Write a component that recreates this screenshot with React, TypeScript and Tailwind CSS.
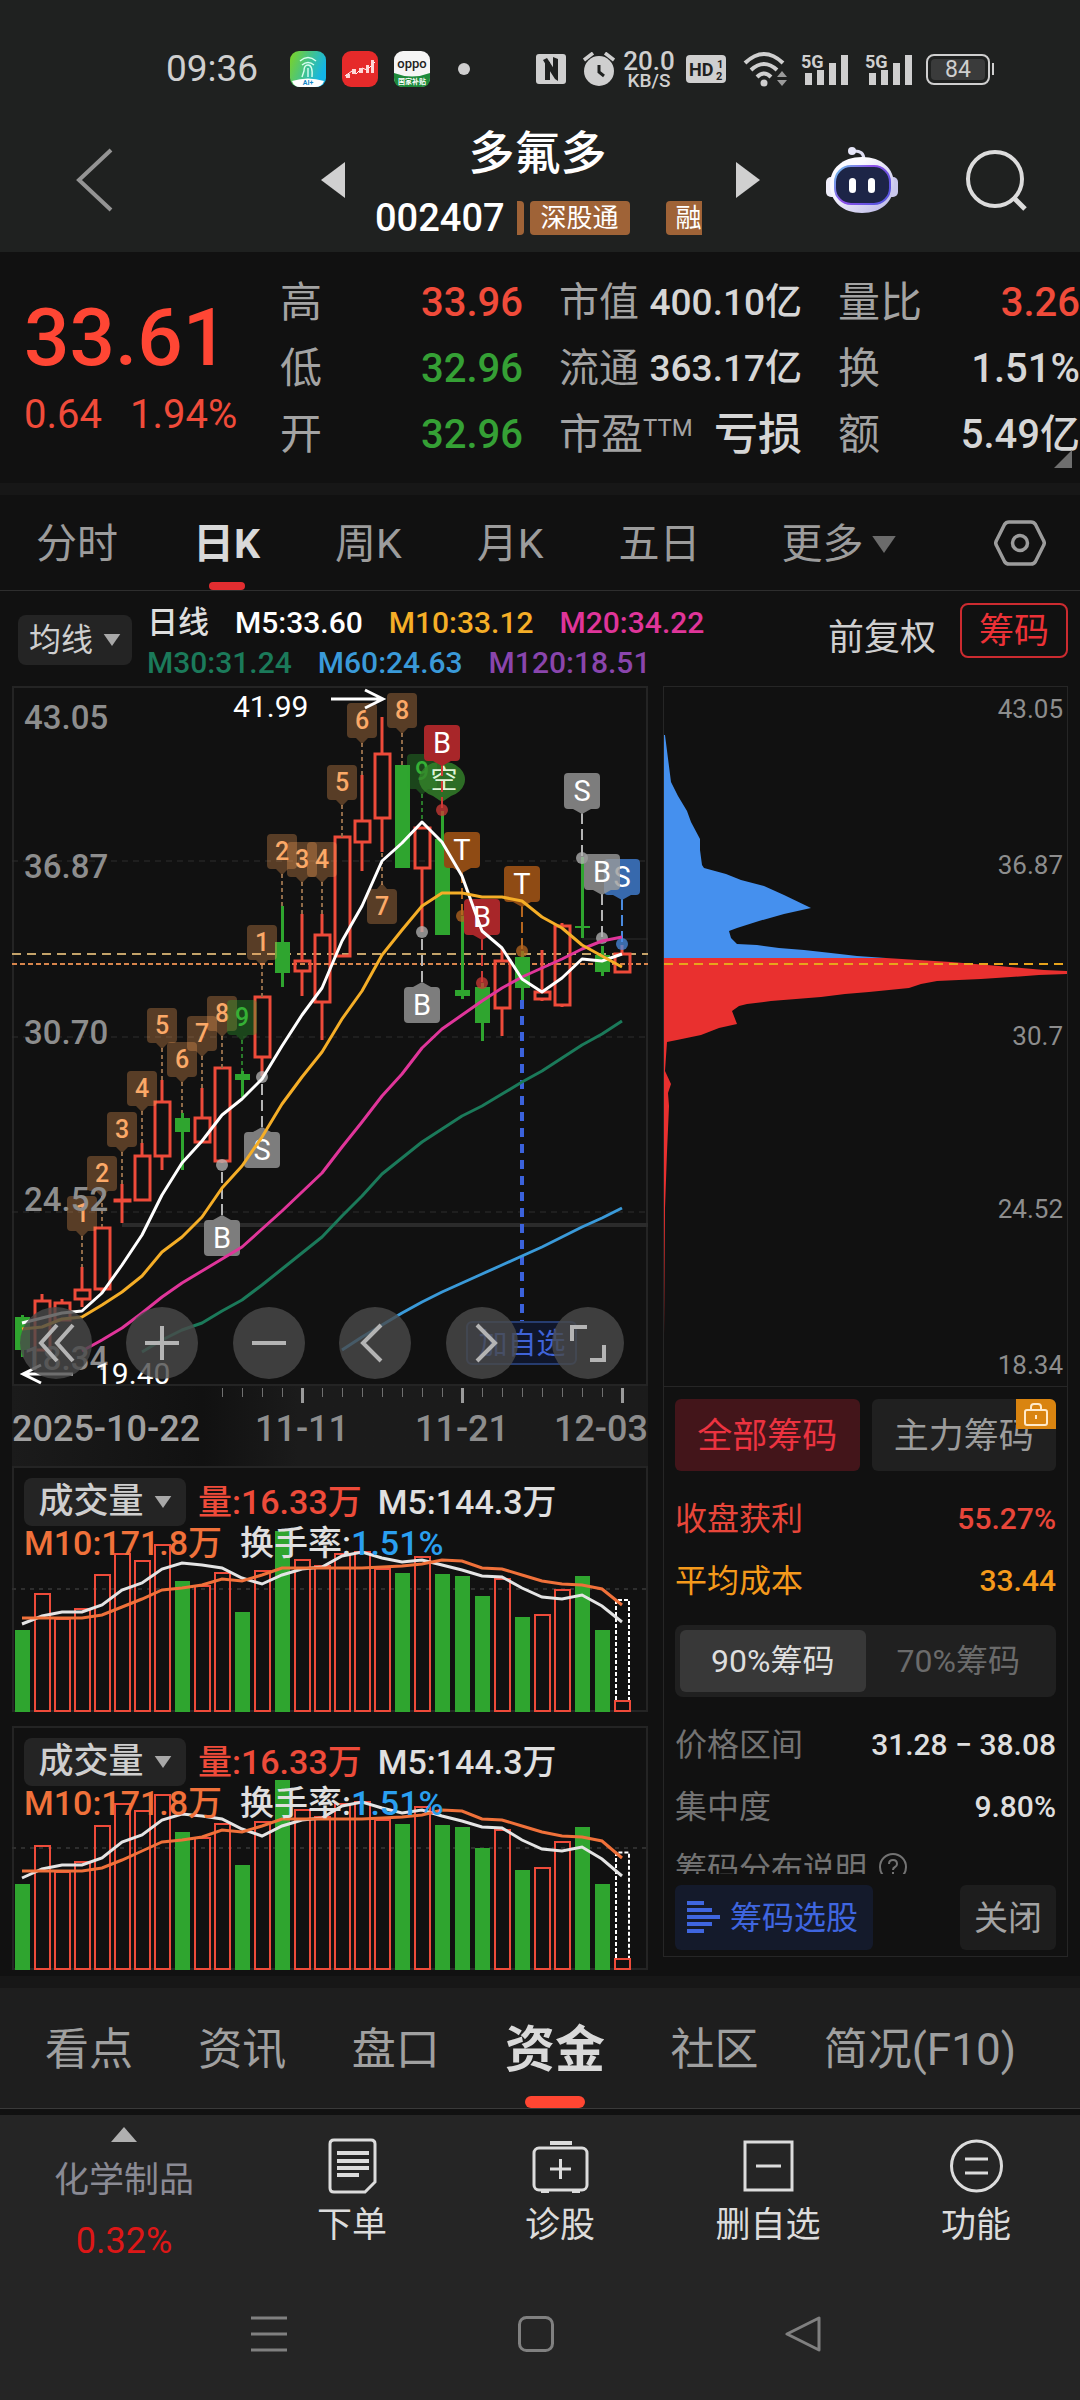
import React, { useState } from 'react'
import clsx from 'clsx'

const RED = '#ee4b3a'
const GREEN = '#2fa52f'

// x of the nth trading day inside the 636 wide charts
const dayX = (i: number) => 10 + i * 20

const toPoints = (values: number[], start = 0) =>
  values.map((y, i) => `${dayX(i + start)},${y}`).join(' ')

// [up, wick top, body top, body bottom, wick bottom]
type Candle = [boolean, number, number, number, number]

const candles: Candle[] = [
  [false, 629, 631, 664, 671],
  [true, 608, 615, 664, 664],
  [true, 613, 617, 634, 634],
  [true, 581, 604, 613, 621],
  [true, 541, 542, 603, 607],
  [true, 498, 514, 515, 537],
  [true, 457, 470, 514, 514],
  [true, 394, 416, 470, 484],
  [false, 427, 432, 446, 484],
  [true, 402, 432, 456, 456],
  [true, 382, 382, 475, 477],
  [false, 385, 388, 394, 411],
  [true, 311, 311, 371, 390],
  [false, 220, 256, 287, 301],
  [true, 228, 275, 285, 310],
  [true, 228, 249, 316, 354],
  [true, 151, 151, 270, 270],
  [true, 89, 135, 156, 185],
  [true, 31, 68, 132, 166],
  [false, 79, 79, 182, 182],
  [true, 141, 142, 182, 246],
  [false, 125, 153, 249, 249],
  [false, 230, 304, 310, 313],
  [false, 297, 301, 337, 355],
  [true, 262, 275, 322, 350],
  [false, 265, 271, 302, 314],
  [true, 264, 306, 313, 315],
  [true, 237, 240, 319, 321],
  [false, 171, 240, 241, 252],
  [false, 260, 269, 286, 290],
  [true, 259, 268, 286, 286]
]

const averages = [
  { color: '#e0359a', start: 3, values: [665, 654, 642, 627, 611, 597, 585, 573, 561, 543, 525, 506, 487, 461, 436, 410, 388, 362, 343, 329, 315, 302, 291, 282, 273, 263, 255, 251] },
  { color: '#1b7a5a', start: 6, values: [666, 654, 644, 637, 625, 614, 599, 583, 567, 551, 530, 510, 488, 472, 456, 443, 430, 420, 408, 396, 385, 372, 359, 348, 335] },
  { color: '#3a9ad9', start: 16, values: [664, 651, 639, 627, 616, 606, 597, 588, 579, 570, 561, 551, 541, 532, 522] },
  { color: '#ffffff', start: 0, values: [637, 632, 627, 625, 607, 579, 549, 509, 477, 455, 429, 413, 393, 360, 329, 302, 255, 220, 175, 157, 136, 156, 190, 245, 262, 293, 306, 292, 273, 275, 268] },
  { color: '#f5ae27', start: 0, values: [643, 641, 633, 631, 619, 606, 590, 566, 551, 531, 502, 480, 451, 418, 391, 366, 333, 305, 269, 244, 220, 207, 207, 211, 211, 215, 231, 242, 259, 270, 281] }
]

// nine-turn counters: [day, top, label, end of the dotted line]
const counters: [number, number, string, number][] = [
  [3, 510, '1', 581],
  [4, 470, '2', 541],
  [5, 426, '3', 498],
  [6, 385, '4', 457],
  [7, 322, '5', 394],
  [8, 356, '6', 427],
  [9, 330, '7', 402],
  [10, 310, '8', 382],
  [11, 314, '9', 385],
  [12, 239, '1', 311],
  [13, 148, '2', 220],
  [14, 156, '3', 228],
  [15, 156, '4', 228],
  [16, 79, '5', 151],
  [17, 17, '6', 89],
  [19, 7, '8', 79],
  [20, 68, '9', 137]
]

type Signal = { day: number; top: number; label: string; dot: number; color: string; line?: string; below?: boolean; opacity?: number }

const signals: Signal[] = [
  { day: 10, top: 534, label: 'B', dot: 479, color: '#7d7d7d', line: '#b5b5b5', below: true },
  { day: 12, top: 446, label: 'S', dot: 391, color: '#7d7d7d', line: '#b5b5b5', below: true },
  { day: 20, top: 301, label: 'B', dot: 246, color: '#7d7d7d', line: '#b5b5b5', below: true },
  { day: 22, top: 146, label: 'T', dot: 230, color: '#8f4b14', line: '#b5661f' },
  { day: 23, top: 213, label: 'B', dot: 297, color: '#a82629', line: '#cf3a35' },
  { day: 25, top: 180, label: 'T', dot: 265, color: '#8f4b14', line: '#b5661f' },
  { day: 28, top: 87, label: 'S', dot: 172, color: '#7d7d7d', line: '#b5b5b5' },
  { day: 30, top: 173, label: 'S', dot: 258, color: '#3769ad', line: '#4a8be0' },
  { day: 29, top: 168, label: 'B', dot: 252, color: '#9a9a9a', line: '#b5b5b5', opacity: 0.8 }
]

const priceLabels = [
  { text: '43.05', y: 43 },
  { text: '36.87', y: 192 },
  { text: '30.70', y: 358 },
  { text: '24.52', y: 525 },
  { text: '18.34', y: 684 }
]

const chipLabels = [
  { text: '43.05', y: 31 },
  { text: '36.87', y: 187 },
  { text: '30.7', y: 358 },
  { text: '24.52', y: 531 },
  { text: '18.34', y: 687 }
]

// volume bar heights, measured from the base line
const volumes = [82, 119, 94, 104, 138, 159, 152, 168, 131, 127, 140, 100, 142, 181, 153, 147, 159, 161, 144, 139, 156, 138, 136, 116, 134, 95, 98, 123, 136, 82]
const volumeM5 = [88, 96, 100, 100, 107, 122, 129, 143, 149, 147, 144, 134, 128, 137, 143, 145, 156, 160, 154, 150, 152, 147, 142, 136, 135, 124, 115, 113, 117, 106, 90]
const volumeM10 = [94, 94, 94, 94, 97, 105, 113, 122, 124, 127, 133, 131, 137, 144, 144, 144, 144, 144, 145, 146, 148, 152, 151, 144, 143, 137, 131, 128, 127, 123, 107]

const Caret: React.FC<{ className?: string }> = ({ className }) => (
  <svg viewBox="0 0 18 13" className={clsx('shrink-0', className)}>
    <path d="M0 0h18L9 13z" fill="currentColor" />
  </svg>
)

const Signal5G: React.FC = () => (
  <svg viewBox="0 0 48 34" className="h-[34px] w-12 overflow-visible">
    <text x="0" y="16" fontSize="18" fontWeight="700" fill="#cfcfcf">5G</text>
    <path d="M4 21h7v12H4zM16 18h7v15h-7zM28 11h7v22h-7zM40 3h7v30h-7z" fill="#cfcfcf" />
  </svg>
)

const StatusBar: React.FC = () => (
  <div className="flex h-12 items-center pr-[86px] pl-[166px] text-[#cfcfcf]">
    <span className="w-[124px] text-[37px] leading-12">09:36</span>
    <div className="flex items-center gap-4">
      <svg viewBox="0 0 36 36" className="size-9">
        <defs>
          <linearGradient id="finger" x1="0" x2="1" y1="0" y2="0.4">
            <stop offset="0" stopColor="#7ed321" />
            <stop offset="1" stopColor="#12b5e8" />
          </linearGradient>
        </defs>
        <rect width="36" height="36" rx="9" fill="url(#finger)" />
        <path d="M2 30q16-5 32 0-2 6-9 6H10q-6 0-8-6z" fill="#fff" />
        <path d="M10 10q8-7 16 0M12 14q6-5 12 0M18 14q-4 0-4 6l-2 6M18 14q5 0 4 12M18 17v9" fill="none" stroke="#d8fff0" strokeWidth="1.4" />
        <text x="18" y="34" fontSize="7" fontWeight="700" textAnchor="middle" fill="#1388c8">AI+</text>
      </svg>
      <svg viewBox="0 0 36 36" className="size-9">
        <rect width="36" height="36" rx="9" fill="#e62a2a" />
        <path d="M3 25l7-5 4 3 6-6 5 2 8-8" fill="none" stroke="#fff" strokeWidth="1" />
        <path d="M4 23h4v4H4zM10 18h4v5h-4zM17 17h4v5h-4zM24 14h3v8h-3zM29 9h3v13h-3z" fill="#ffd7d7" />
      </svg>
      <svg viewBox="0 0 36 36" className="size-9">
        <rect width="36" height="36" rx="9" fill="#f5f5f5" />
        <path d="M0 22q18 7 36 0v5q0 9-9 9H9q-9 0-9-9z" fill="#1d8a3a" />
        <text x="18" y="17" fontSize="13" fontWeight="500" textAnchor="middle" fill="#222">oppo</text>
        <text x="18" y="33" fontSize="7" fontWeight="700" textAnchor="middle" fill="#fff">国家补贴</text>
      </svg>
    </div>
    <span className="ml-7 size-3 rounded-full bg-[#cfcfcf]" />
    <div className="ml-auto flex items-center">
      <svg viewBox="0 0 30 30" className="size-[30px]">
        <rect width="30" height="30" rx="3" fill="#cfcfcf" />
        <path d="M9 26V5l5 3v18zM7 6l4-2 11 17v6l-3-2-9-14zM17 3l5 2v20l-5-7z" fill="#1f2120" />
      </svg>
      <svg viewBox="0 0 32 34" className="ml-[17px] h-[34px] w-8">
        <circle cx="16" cy="19" r="15" fill="#cfcfcf" />
        <path d="M1 8l9-7M31 8l-9-7" stroke="#cfcfcf" strokeWidth="3.500" />
        <path d="M16 13v7l5 4" fill="none" stroke="#1f2120" strokeWidth="3" />
      </svg>
      <div className="ml-2 flex w-[52px] flex-col items-center font-medium">
        <span className="text-[26px] leading-6">20.0</span>
        <span className="text-[19px] leading-4">KB/S</span>
      </div>
      <svg viewBox="0 0 40 28" className="ml-[11px] h-7 w-10">
        <rect width="40" height="28" rx="4" fill="#cfcfcf" />
        <text x="3" y="21" fontSize="18" fontWeight="700" fill="#1f2120">HD</text>
        <text x="31" y="13" fontSize="11" fontWeight="700" fill="#1f2120">1</text>
        <text x="30" y="25" fontSize="11" fontWeight="700" fill="#1f2120">2</text>
      </svg>
      <svg viewBox="0 0 46 36" className="ml-[17px] h-9 w-[46px]">
        <path d="M2 12q19-18 38 0M8 19q13-12 26 0M14 26q7-7 14 0" fill="none" stroke="#cfcfcf" strokeWidth="4" />
        <circle cx="21" cy="32" r="3.500" fill="#cfcfcf" />
        <path d="M34 26l5-6 5 6zM34 29h10l-5 6z" fill="#9b9b9b" />
      </svg>
      <span className="ml-3"><Signal5G /></span>
      <span className="ml-4"><Signal5G /></span>
      <div className="ml-[13px] flex h-[31px] w-16 items-center rounded-lg border-2 border-[#cfcfcf] p-[3px]">
        <span className="h-full w-full rounded-sm bg-[#3a3b3b] text-center text-[23px] leading-[21px]">84</span>
      </div>
      <span className="ml-0.5 h-3 w-0.5 bg-[#cfcfcf]" />
    </div>
  </div>
)

const Robot: React.FC = () => (
  <svg viewBox="0 0 72 68" className="h-[68px] w-[72px]">
    <defs>
      <linearGradient id="shell" x1="0" x2="1" y1="0" y2="1">
        <stop offset="0.3" stopColor="#fbfaff" />
        <stop offset="1" stopColor="#b5b2e4" />
      </linearGradient>
      <linearGradient id="visor" x1="0" x2="1" y1="0" y2="0.6">
        <stop offset="0" stopColor="#6ac4e8" />
        <stop offset="0.5" stopColor="#8d4fe8" />
        <stop offset="1" stopColor="#5a55e0" />
      </linearGradient>
    </defs>
    <path d="M27 5q11-1 11 9" fill="none" stroke="#dcdcf0" strokeWidth="3" />
    <circle cx="26" cy="5" r="4" fill="#e6e6f8" />
    <rect y="31" width="12" height="20" rx="5" fill="#eeedf9" />
    <rect x="60" y="31" width="12" height="20" rx="5" fill="#c9c7ec" />
    <path d="M36 11c20 0 32 12 32 27 0 18-13 29-32 29S4 56 4 38c0-15 12-27 32-27z" fill="url(#shell)" />
    <rect x="9" y="20" width="55" height="38" rx="16" fill="#1d2547" stroke="url(#visor)" strokeWidth="2" />
    <rect x="23" y="32" width="7" height="15" rx="3.500" fill="#fff" />
    <rect x="42" y="32" width="7" height="15" rx="3.500" fill="#fff" />
  </svg>
)

const Header: React.FC = () => (
  <header className="bg-[#1f2120] pt-[45px]">
    <StatusBar />
    <div className="flex h-[159px] items-center pt-[14px]">
      <button type="button" aria-label="返回" className="ml-[75px]">
        <svg viewBox="0 0 38 64" className="h-16 w-[38px]">
          <path d="M36 2L4 32l32 30" fill="none" stroke="#949494" strokeWidth="4" />
        </svg>
      </button>
      <button type="button" aria-label="上一只" className="ml-auto">
        <svg viewBox="0 0 24 36" className="h-9 w-6"><path d="M24 0v36L0 18z" fill="#d0d0d0" /></svg>
      </button>
      <div className="mx-[30px] w-[331px] pt-2">
        <h1 className="pr-1.5 text-center text-[46px] leading-[68px] font-medium text-white">多氟多</h1>
        <div className="flex items-center">
          <span className="text-[38px] leading-[62px] font-medium text-white">002407</span>
          <div className="ml-3 flex h-[34px] flex-1 overflow-hidden text-[26px] leading-[34px] whitespace-nowrap text-white">
            <span className="w-[7px] shrink-0 rounded-r-sm bg-[#9f6337]" />
            <span className="ml-[6px] shrink-0 rounded-sm bg-[#9f6337] px-[11px]">深股通</span>
            <span className="ml-9 shrink-0 rounded-l-sm bg-[#9f6337] pl-[10px]">融</span>
          </div>
        </div>
      </div>
      <button type="button" aria-label="下一只">
        <svg viewBox="0 0 24 36" className="h-9 w-6"><path d="M0 0v36l24-18z" fill="#d0d0d0" /></svg>
      </button>
      <button type="button" aria-label="智能助手" className="ml-[66px]"><Robot /></button>
      <button type="button" aria-label="搜索" className="mr-[53px] ml-[67px]">
        <svg viewBox="0 0 62 62" className="size-[62px]">
          <circle cx="30" cy="30" r="27" fill="none" stroke="#dcdcdc" strokeWidth="4" />
          <path d="M48 48l12 12" stroke="#dcdcdc" strokeWidth="5" />
        </svg>
      </button>
    </div>
  </header>
)

const Quote: React.FC = () => (
  <section className="grid grid-cols-[280fr_279fr_279fr_242fr] pt-[18px] pb-[15px] text-[40px] leading-[66px] font-medium">
    <div className="pl-6 text-[#ff4634]">
      <p className="pt-5 text-[80px] leading-[96px]">33.61</p>
      <p className="flex gap-7 text-[40px] leading-[58px] font-normal text-[#f04b3a]">
        <span>0.64</span>
        <span>1.94%</span>
      </p>
    </div>
    <dl className="pr-9">
      {[
        { label: '高', value: '33.96', up: true },
        { label: '低', value: '32.96', up: false },
        { label: '开', value: '32.96', up: false }
      ].map((row) => (
        <div key={row.label} className="flex justify-between">
          <dt className="text-[42px] font-normal text-[#a3a3a3]">{row.label}</dt>
          <dd className={row.up ? 'text-[#f04b3a]' : 'text-[#35a035]'}>{row.value}</dd>
        </div>
      ))}
    </dl>
    <dl className="pr-9 whitespace-nowrap">
      <div className="flex justify-between">
        <dt className="font-normal text-[#a3a3a3]">市值</dt>
        <dd className="text-[37px] text-[#d6d6d6]">400.10亿</dd>
      </div>
      <div className="flex justify-between">
        <dt className="font-normal text-[#a3a3a3]">流通</dt>
        <dd className="text-[37px] text-[#d6d6d6]">363.17亿</dd>
      </div>
      <div className="flex justify-between">
        <dt className="flex text-[42px] font-normal text-[#a3a3a3]">
          <span>市盈</span>
          <span className="text-2xl leading-[52px]">TTM</span>
        </dt>
        <dd className="text-[44px] text-[#d6d6d6]">亏损</dd>
      </div>
    </dl>
    <dl className="relative">
      {[
        { label: '量比', value: '3.26', up: true },
        { label: '换', value: '1.51%', up: false },
        { label: '额', value: '5.49亿', up: false }
      ].map((row) => (
        <div key={row.label} className="flex justify-between">
          <dt className="text-[42px] font-normal text-[#a3a3a3]">{row.label}</dt>
          <dd className={row.up ? 'text-[#f04b3a]' : 'text-[#d6d6d6]'}>{row.value}</dd>
        </div>
      ))}
      <svg viewBox="0 0 18 18" className="absolute right-2 bottom-0 size-[18px]">
        <path d="M18 0v18H0z" fill="#6f6f6f" />
      </svg>
    </dl>
  </section>
)

const periods = ['分时', '日K', '周K', '月K', '五日']

const PeriodTabs: React.FC = () => {
  const [period, setPeriod] = useState('日K')

  return (
    <nav className="flex h-24 items-center gap-[75px] border-b border-[#2e2e2e] pr-[34px] pl-9 text-[41px] leading-[95px] text-[#9c9c9c]">
      {periods.map((name) => (
        <button
          key={name}
          type="button"
          onClick={() => setPeriod(name)}
          className={clsx('relative pt-1', name === period && 'font-bold text-[#d9d9d9]')}
        >
          {name}
          {name === period && <span className="absolute bottom-0.5 left-1/2 h-2 w-9 -translate-x-1/2 rounded-sm bg-[#e32d30]" />}
        </button>
      ))}
      <button type="button" className="ml-1.5 flex items-center gap-2 pt-1">
        更多
        <Caret className="h-[17px] w-6 text-[#6b6b6b]" />
      </button>
      <button type="button" aria-label="设置" className="ml-auto">
        <svg viewBox="0 0 52 46" className="h-[46px] w-[52px]">
          <path d="M15 2h22q3 0 4.500 2.500l8 16q1.500 2.500 0 5l-8 16q-1.500 2.500-4.500 2.500H15q-3 0-4.500-2.500l-8-16q-1.500-2.500 0-5l8-16Q12 2 15 2z" fill="none" stroke="#9c9c9c" strokeWidth="3.500" />
          <circle cx="26" cy="23" r="7.500" fill="none" stroke="#9c9c9c" strokeWidth="3.500" />
        </svg>
      </button>
    </nav>
  )
}

const Legend: React.FC = () => (
  <div className="flex h-[95px] items-start px-3 pt-3 text-[30px] leading-10 font-medium whitespace-nowrap">
    <button type="button" className="mt-3 ml-1.5 flex h-[50px] w-[114px] items-center justify-center gap-2.5 rounded-lg bg-[#242424] text-[32px] font-normal text-[#cfcfcf]">
      均线
      <Caret className="h-3 w-[18px] text-[#a8a8a8]" />
    </button>
    <div className="ml-[15px]">
      <p className="flex gap-[26px]">
        <span className="text-[31px] text-[#dedede]">日线</span>
        <span className="text-white">M5:33.60</span>
        <span className="text-[#f5ae27]">M10:33.12</span>
        <span className="text-[#e0359a]">M20:34.22</span>
      </p>
      <p className="flex gap-[26px]">
        <span className="text-[#1b7a5a]">M30:31.24</span>
        <span className="text-[#3a9ad9]">M60:24.63</span>
        <span className="text-[#8a45ad]">M120:18.51</span>
      </p>
    </div>
    <button type="button" className="mt-[15px] ml-auto text-[36px] font-normal text-[#cfcfcf]">前复权</button>
    <button type="button" className="ml-6 h-[55px] w-[108px] rounded-lg border-2 border-[#cc2b30] pt-0.5 text-[35px] font-normal text-[#ec3137]">筹码</button>
  </div>
)

const Badge: React.FC<{ x: number; top: number; label: string; end: number; below?: boolean }> = ({ x, top, label, end, below }) => {
  const fill = label === '9' ? 'rgba(47,165,47,0.35)' : 'rgba(255,165,90,0.3)'
  const text = label === '9' ? '#35b035' : '#fba968'
  return (
    <g>
      <path d={`M${x} ${below ? top - 4 : top + 40}V${end}`} stroke={label === '9' ? '#2a7a2a' : '#8f6a48'} strokeWidth="2" strokeDasharray="4 3" />
      <path
        d={
          below
            ? `M${x - 11} ${top}h6l5-6 5 6h6a4 4 0 0 1 4 4v27a4 4 0 0 1-4 4h-22a4 4 0 0 1-4-4v-27a4 4 0 0 1 4-4z`
            : `M${x - 11} ${top}h22a4 4 0 0 1 4 4v27a4 4 0 0 1-4 4h-5l-6 6-6-6h-5a4 4 0 0 1-4-4v-27a4 4 0 0 1 4-4z`
        }
        fill={fill}
      />
      <text x={x} y={top + 26} fontSize="25" fontWeight="500" textAnchor="middle" fill={text}>{label}</text>
    </g>
  )
}

const SignalMark: React.FC<{ signal: Signal }> = ({ signal }) => {
  const { day, top, label, dot, color, line, below, opacity = 1 } = signal
  const x = dayX(day)
  return (
    <g>
      <circle cx={x} cy={dot} r="6" fill={line} opacity="0.75" />
      <path d={below ? `M${x} ${top - 5}V${dot + 5}` : `M${x} ${top + 40}V${dot}`} stroke={line} strokeWidth="2" strokeDasharray="11 5" />
      <g opacity={opacity}>
        <rect x={x - 18} y={top} width="36" height="36" rx="4" fill={color} />
        <path d={below ? `M${x - 9} ${top}l9-5 9 5z` : `M${x - 9} ${top + 36}l9 5 9-5z`} fill={color} />
      </g>
      <text x={x} y={top + 28} fontSize="29" textAnchor="middle" fill="#fff">{label}</text>
    </g>
  )
}

const CandleChart: React.FC = () => (
  <svg viewBox="0 0 636 700" className="block h-auto w-full">
    <path d="M0 1H636M0 699H636" stroke="#242424" strokeWidth="2" />
    <path d="M1 0V700M635 0V700" stroke="#242424" strokeWidth="2" />
    <path d="M0 175H636M0 351H636M0 526H636" stroke="#2e2e2e" strokeDasharray="6 5" />
    <path d="M570 253H636" stroke="#2e2e2e" />
    <path d="M110 539H636" stroke="#2b2b2b" strokeWidth="4" />
    <path d="M0 268H636" stroke="#c4a36a" strokeWidth="2" strokeDasharray="9 6" />
    <path d="M0 278H636" stroke="#d8854c" strokeWidth="2" strokeDasharray="5 3" />

    <path d={`M${dayX(25)} 314V636`} stroke="#3b62dc" strokeWidth="4" strokeDasharray="9 7" />
    <rect x="455" y="636" width="109" height="42" rx="5" fill="#10162a" stroke="#263c70" strokeWidth="2" />
    <text x="510" y="668" fontSize="29" textAnchor="middle" fill="#3f63d8">加自选</text>

    {candles.map(([up, high, top, bottom, low], i) => {
      const x = dayX(i)
      return up ? (
        <g key={i} stroke={RED} strokeWidth="3" fill="none">
          <path d={`M${x} ${high}V${top}M${x} ${bottom}V${low}`} />
          <rect x={x - 7} y={top} width="15" height={bottom - top} />
        </g>
      ) : (
        <g key={i} fill={GREEN}>
          <rect x={x - 1} y={high} width="3" height={low - high} />
          <rect x={x - 7} y={top} width="15" height={Math.max(bottom - top, 2)} />
        </g>
      )
    })}

    {counters.map(([day, top, label, end]) => (
      <Badge key={day} x={dayX(day)} top={top} label={label} end={end} />
    ))}
    <Badge x={dayX(18)} top={203} label="7" end={166} below />

    {/* short signal with the buy mark above it */}
    <path d="M430 116l-9-6a23 18 0 1 1 18 0z" fill="#35852a" opacity="0.8" />
    <text x="432" y="103" fontSize="27" textAnchor="middle" fill="#dff5d8">空</text>
    <SignalMark signal={{ day: 21, top: 39, label: 'B', dot: 124, color: '#a82629', line: '#cf3a35' }} />
    {signals.map((signal) => (
      <SignalMark key={signal.day} signal={signal} />
    ))}

    {averages.map(({ color, start, values }) => (
      <polyline key={color} points={toPoints(values, start)} fill="none" stroke={color} strokeWidth="3" strokeLinejoin="round" />
    ))}

    {priceLabels.map(({ text, y }) => (
      <text key={text} x="12" y={y} fontSize="33" fontWeight="500" fill="#8d8d8d">{text}</text>
    ))}

    <g stroke="#fff" strokeWidth="3" fill="none">
      <path d="M319 13H370M353 4l18 9-18 9" />
      <path d="M61 688H12M29 679l-18 9 18 9" />
    </g>
    <text x="221" y="31" fontSize="30" fill="#fff">41.99</text>
    <text x="83" y="698" fontSize="30" fill="#fff">19.40</text>
  </svg>
)

const tools = [
  { label: '最早', d: 'M37 18L21 36l16 18M53 18L37 36l16 18' },
  { label: '放大', d: 'M19 36h34M36 19v34' },
  { label: '缩小', d: 'M19 36h34' },
  { label: '左移', d: 'M42 18L24 36l18 18' },
  { label: '右移', d: 'M31 18l18 18-18 18' },
  { label: '全屏', d: 'M20 34V20h15M38 53h14V38' }
]

const ChartTools: React.FC = () => (
  <div className="absolute inset-x-0 bottom-[7px] flex justify-between pr-6 pl-2">
    {tools.map((tool) => (
      <button key={tool.label} type="button" aria-label={tool.label} className="size-[72px] rounded-full bg-[#4a4a4a]/80">
        <svg viewBox="0 0 72 72" className="size-full">
          <path d={tool.d} fill="none" stroke="#b4b4b4" strokeWidth="4" />
        </svg>
      </button>
    ))}
  </div>
)

const DateAxis: React.FC = () => (
  <div className="bg-linear-to-r from-[#1b1b1b] via-[#111111] via-30% to-[#1b1b1b] to-45%">
    <svg viewBox="0 0 636 80" className="block h-auto w-full">
      {Array.from({ length: 21 }, (_, n) => n + 10).map((i) => {
        const major = i === 14 || i === 22 || i === 30
        return (
          <rect
            key={i}
            x={dayX(i) - (major ? 1 : 0)}
            y="2"
            width={major ? 3 : 1}
            height={major ? 15 : 9}
            fill={major ? '#9a9a9a' : '#707070'}
          />
        )
      })}
      <g fontSize="36" fontWeight="500" fill="#8d8d8d">
        <text x="0" y="55" fill="#a0a0a0">2025-10-22</text>
        <text x="290" y="55" textAnchor="middle">11-11</text>
        <text x="450" y="55" textAnchor="middle">11-21</text>
        <text x="636" y="55" textAnchor="end">12-03</text>
      </g>
    </svg>
  </div>
)

const VolumePanel: React.FC<{ height: number; scale: number; className?: string }> = ({ height, scale, className }) => {
  const line = (values: number[]) => toPoints(values.map((v) => Math.round(height - v * scale)))
  const mid = Math.round(height / 2)

  return (
    <section className={clsx('relative', className)}>
      <svg viewBox={`0 0 636 ${height}`} className="block h-auto w-full">
        <rect x="1" y="1" width="634" height={height - 2} fill="none" stroke="#242424" strokeWidth="2" />
        <path d={`M0 ${mid}H636`} stroke="#2e2e2e" strokeWidth="2" strokeDasharray="4 5" />
        {volumes.map((v, i) => {
          const h = Math.round(v * scale)
          // a day's bar takes the colour of its candle
          return candles[i][0] ? (
            <rect key={i} x={dayX(i) - 7} y={height - h + 1} width="15" height={h - 2} fill="none" stroke={RED} strokeWidth="2" />
          ) : (
            <rect key={i} x={dayX(i) - 7} y={height - h} width="15" height={h} fill={GREEN} />
          )
        })}
        <rect x={dayX(30) - 7} y={height - 11} width="15" height="10" fill="none" stroke={RED} strokeWidth="2" />
        <path d={`M604 ${height - 12}V${height - 112 * scale}H617V${height - 12}`} fill="none" stroke="#fff" strokeWidth="2" strokeDasharray="4 2" />
        <polyline points={line(volumeM5)} fill="none" stroke="#e4e4e4" strokeWidth="3" />
        <polyline points={line(volumeM10)} fill="none" stroke="#f0713a" strokeWidth="3" />
      </svg>
      <div className="absolute inset-x-0 top-0 px-3 pt-3 text-[34px] font-medium whitespace-nowrap">
        <div className="flex h-12 items-center gap-4 leading-12">
          <button type="button" className="flex h-12 w-[162px] shrink-0 items-center justify-center gap-2.5 rounded-lg bg-[#242424] text-[35px] text-[#cfcfcf]">
            成交量
            <Caret className="h-3 w-[18px] text-[#a8a8a8]" />
          </button>
          <span className="-ml-1 text-[#ee4b3a]">量:16.33万</span>
          <span className="text-[#e0e0e0]">M5:144.3万</span>
        </div>
        <p className="flex gap-[18px] leading-[34px]">
          <span className="text-[#f0713a]">M10:171.8万</span>
          <span className="text-[#e0e0e0]">换手率:<span className="text-[#2a9ff0]">1.51%</span></span>
        </p>
      </div>
    </section>
  )
}

const ChipChart: React.FC = () => (
  <svg viewBox="0 0 403 699" className="block h-auto w-full">
    <polygon points="0,48 1,48 7,95 14,109 23,124 27,135 36,152 36,163 38,178 40,181 62,187 77,193 100,199 120,208 147,221 120,227 95,234 73,241 65,244 67,251 73,257 93,258 115,261 140,263 167,266 193,269 222,271 0,271" fill="#4590ee" />
    <polygon points="0,271 222,271 254,273 287,275 335,279 380,283 403,284 403,287 375,288 347,290 317,292 273,294 257,297 245,301 225,303 205,305 181,307 157,310 132,312 107,314 83,317 75,319 68,324 73,337 55,341 37,348 13,353 3,355 1,384 7,397 4,406 5,419 3,465 1,521 0,648" fill="#e9302f" />
    <path d="M0 277H403" stroke="#e8a41c" strokeWidth="2" strokeDasharray="9 6" />
    {chipLabels.map(({ text, y }) => (
      <text key={text} x="399" y={y} fontSize="26" textAnchor="end" fill="#8d8d8d">{text}</text>
    ))}
  </svg>
)

const ChipRow: React.FC<{ label: string; value: string; tone: string }> = ({ label, value, tone }) => (
  <div className={clsx('flex items-center justify-between', tone)}>
    <dt className={clsx('text-[32px]', tone === 'text-[#dedede]' && 'text-[#737373]')}>{label}</dt>
    <dd className="text-[30px] font-medium">{value}</dd>
  </div>
)

const ChipPanel: React.FC = () => {
  const [range, setRange] = useState('90%筹码')

  return (
    <aside className="self-start border border-[#262626] leading-[62px] whitespace-nowrap">
      <ChipChart />
      <div className="border-t border-[#262626] px-[11px] pt-3 pb-1.5">
        <div className="grid h-[72px] grid-cols-2 gap-3 text-[35px]">
          <button type="button" className="rounded-md bg-[#43151a] pt-1 text-[#ec3340]">全部筹码</button>
          <button type="button" className="relative rounded-md bg-[#202020] pt-1 text-[#9c9c9c]">
            主力筹码
            <span className="absolute top-0 right-0 flex h-[30px] w-10 items-center justify-center rounded-tr-md bg-[#d98410]">
              <svg viewBox="0 0 24 24" className="size-6" fill="none" stroke="#ffe9c8" strokeWidth="2">
                <rect x="1" y="8" width="22" height="15" rx="2" />
                <path d="M7 8V5q0-3 3-3h4q3 0 3 3v3M12 13v4" />
              </svg>
            </span>
          </button>
        </div>
        <dl className="mt-[17px]">
          <ChipRow label="收盘获利" value="55.27%" tone="text-[#e8463a]" />
          <ChipRow label="平均成本" value="33.44" tone="text-[#f59a1b]" />
        </dl>
        <div className="mt-[13px] grid h-[72px] grid-cols-2 rounded-lg bg-[#202020] p-[5px] text-[32px]">
          {['90%筹码', '70%筹码'].map((name) => (
            <button
              key={name}
              type="button"
              onClick={() => setRange(name)}
              className={clsx('rounded-md', name === range ? 'bg-[#383838] text-[#dedede]' : 'text-[#6b6b6b]')}
            >
              {name}
            </button>
          ))}
        </div>
        <dl className="mt-[17px]">
          <ChipRow label="价格区间" value="31.28 − 38.08" tone="text-[#dedede]" />
          <ChipRow label="集中度" value="9.80%" tone="text-[#dedede]" />
        </dl>
        <div className="flex h-9 items-start gap-3 overflow-hidden text-[32px] text-[#737373]">
          筹码分布说明
          <svg viewBox="0 0 28 28" className="mt-[15px] size-7 shrink-0" fill="none" stroke="#737373" strokeWidth="2">
            <circle cx="14" cy="14" r="13" />
            <path d="M10 11q0-4 4-4t4 4q0 2-2 3t-2 3M14 19v2" />
          </svg>
        </div>
        <div className="mt-[11px] flex h-[65px] justify-between">
          <button type="button" className="flex w-[198px] items-center gap-2.5 rounded-md bg-[#141a2b] pl-3 text-[32px] text-[#3f66e0]">
            <svg viewBox="0 0 33 33" className="size-[33px]" fill="#3f66e0">
              <path d="M0 0h17v4H0zM0 7h25v4H0zM0 14h33v4H0zM0 21h25v4H0zM0 28h17v4H0z" />
            </svg>
            筹码选股
          </button>
          <button type="button" className="w-24 rounded-md bg-[#1d1d1d] text-[34px] text-[#a3a3a3]">关闭</button>
        </div>
      </div>
    </aside>
  )
}

const infoTabs = ['看点', '资讯', '盘口', '资金', '社区', '简况(F10)']

const InfoTabs: React.FC = () => {
  const [tab, setTab] = useState('资金')

  return (
    <nav className="flex h-[121px] items-center justify-between border-b border-[#3a3a3a] bg-[#1e1e1e] pr-16 pl-[45px] text-[44px] leading-[120px] text-[#a0a0a0]">
      {infoTabs.map((name) => (
        <button
          key={name}
          type="button"
          onClick={() => setTab(name)}
          className={clsx('relative pt-1', name === tab && 'text-[50px] font-bold text-[#d9d9d9]')}
        >
          {name}
          {name === tab && <span className="absolute bottom-0.5 left-1/2 h-3 w-[60px] -translate-x-1/2 rounded-md bg-[#ff4632]" />}
        </button>
      ))}
    </nav>
  )
}

const actions = [
  {
    label: '下单',
    icon: (
      <>
        <path d="M10 3h37q4 0 4 4v38l-10 10H10q-4 0-4-4V7q0-4 4-4z" />
        <path d="M13 16h32M13 24h32M13 31h32M13 38h22" strokeWidth="4" />
      </>
    )
  },
  {
    label: '诊股',
    icon: (
      <>
        <rect x="2" y="11" width="53" height="42" rx="5" />
        <path d="M18 6h22M9 54h8M40 54h8" strokeWidth="4" />
        <path d="M28.500 22v20M18 32h21" />
      </>
    )
  },
  {
    label: '删自选',
    icon: (
      <>
        <rect x="5" y="5" width="47" height="48" />
        <path d="M16 29h25" />
      </>
    )
  },
  {
    label: '功能',
    icon: (
      <>
        <circle cx="28.500" cy="29" r="25" />
        <path d="M17 22h23M17 36h23" />
      </>
    )
  }
]

const ActionBar: React.FC = () => (
  <div className="grid h-[165px] grid-cols-[248fr_208fr_208fr_208fr_208fr]">
    <button type="button" className="flex flex-col items-center justify-start pt-3">
      <svg viewBox="0 0 26 15" className="h-[15px] w-[26px]"><path d="M0 15L13 0l13 15z" fill="#b0b0b0" /></svg>
      <span className="pt-[14px] text-[35px] leading-[50px] text-[#8a8a94]">化学制品</span>
      <span className="text-4xl leading-[70px] text-[#dd1717]">0.32%</span>
    </button>
    {actions.map((action) => (
      <button key={action.label} type="button" className="flex flex-col items-center justify-start pt-[22px] text-[#dcdcdc]">
        <svg viewBox="0 0 57 58" className="h-[58px] w-[57px]" fill="none" stroke="currentColor" strokeWidth="3">
          {action.icon}
        </svg>
        <span className="pt-1 text-[35px] leading-[54px]">{action.label}</span>
      </button>
    ))}
  </div>
)

const SystemNav: React.FC = () => (
  <div className="flex h-[120px] items-center justify-around pr-36 pb-3 pl-[135px]">
    <button type="button" aria-label="最近任务">
      <svg viewBox="0 0 36 38" className="h-[38px] w-9" stroke="#808080" strokeWidth="3">
        <path d="M0 3h36M0 19h36M0 35h36" />
      </svg>
    </button>
    <button type="button" aria-label="主屏幕">
      <svg viewBox="0 0 36 38" className="h-[38px] w-9" fill="none" stroke="#808080" strokeWidth="3">
        <rect x="1.500" y="2.500" width="33" height="33" rx="7" />
      </svg>
    </button>
    <button type="button" aria-label="后退">
      <svg viewBox="0 0 36 38" className="h-[38px] w-9" fill="none" stroke="#808080" strokeWidth="3" strokeLinejoin="round">
        <path d="M34 3v32L2 19z" />
      </svg>
    </button>
  </div>
)

const App: React.FC = () => {
  return (
    <div className="flex min-h-screen flex-col bg-[#111111] font-['Roboto','Noto_Sans_CJK_SC',sans-serif]">
      <Header />
      <Quote />
      <div className="h-3 bg-[#171717]" />
      <PeriodTabs />
      <Legend />
      <main className="grid grid-cols-[636fr_405fr] gap-[15px] px-3 pb-1.5">
        <div>
          <div className="relative">
            <CandleChart />
            <ChartTools />
          </div>
          <DateAxis />
          <VolumePanel height={246} scale={1} />
          <VolumePanel height={244} scale={1.05} className="mt-[14px]" />
        </div>
        <ChipPanel />
      </main>
      <div className="h-3 bg-[#171717]" />
      <InfoTabs />
      <footer className="mt-1.5 flex-1 bg-[#252525]">
        <ActionBar />
        <SystemNav />
      </footer>
    </div>
  )
}

export default App
